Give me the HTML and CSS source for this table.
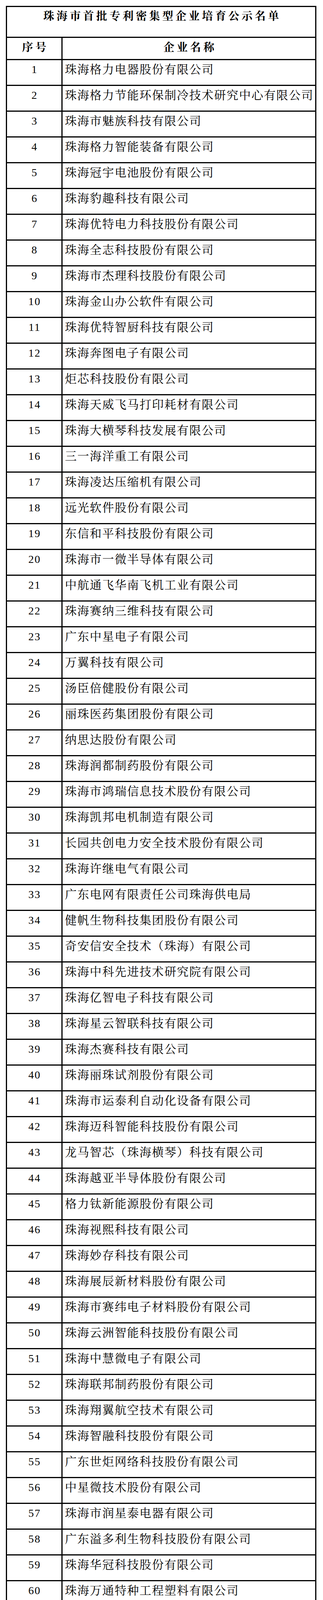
FILE: index.html
```html
<!DOCTYPE html>
<html lang="zh-CN">
<head>
<meta charset="utf-8">
<title>珠海市首批专利密集型企业培育公示名单</title>
<link rel="stylesheet" href="styles.css">
</head>
<body>
<div class="sheet">
<div class="title">珠海市首批专利密集型企业培育公示名单</div>
<div class="cell head">序号</div><div class="cell head">企业名称</div>
<div class="cell num">1</div><div class="cell name">珠海格力电器股份有限公司</div>
<div class="cell num">2</div><div class="cell name">珠海格力节能环保制冷技术研究中心有限公司</div>
<div class="cell num">3</div><div class="cell name">珠海市魅族科技有限公司</div>
<div class="cell num">4</div><div class="cell name">珠海格力智能装备有限公司</div>
<div class="cell num">5</div><div class="cell name">珠海冠宇电池股份有限公司</div>
<div class="cell num">6</div><div class="cell name">珠海豹趣科技有限公司</div>
<div class="cell num">7</div><div class="cell name">珠海优特电力科技股份有限公司</div>
<div class="cell num">8</div><div class="cell name">珠海全志科技股份有限公司</div>
<div class="cell num">9</div><div class="cell name">珠海市杰理科技股份有限公司</div>
<div class="cell num">10</div><div class="cell name">珠海金山办公软件有限公司</div>
<div class="cell num">11</div><div class="cell name">珠海优特智厨科技有限公司</div>
<div class="cell num">12</div><div class="cell name">珠海奔图电子有限公司</div>
<div class="cell num">13</div><div class="cell name">炬芯科技股份有限公司</div>
<div class="cell num">14</div><div class="cell name">珠海天威飞马打印耗材有限公司</div>
<div class="cell num">15</div><div class="cell name">珠海大横琴科技发展有限公司</div>
<div class="cell num">16</div><div class="cell name">三一海洋重工有限公司</div>
<div class="cell num">17</div><div class="cell name">珠海凌达压缩机有限公司</div>
<div class="cell num">18</div><div class="cell name">远光软件股份有限公司</div>
<div class="cell num">19</div><div class="cell name">东信和平科技股份有限公司</div>
<div class="cell num">20</div><div class="cell name">珠海市一微半导体有限公司</div>
<div class="cell num">21</div><div class="cell name">中航通飞华南飞机工业有限公司</div>
<div class="cell num">22</div><div class="cell name">珠海赛纳三维科技有限公司</div>
<div class="cell num">23</div><div class="cell name">广东中星电子有限公司</div>
<div class="cell num">24</div><div class="cell name">万翼科技有限公司</div>
<div class="cell num">25</div><div class="cell name">汤臣倍健股份有限公司</div>
<div class="cell num">26</div><div class="cell name">丽珠医药集团股份有限公司</div>
<div class="cell num">27</div><div class="cell name">纳思达股份有限公司</div>
<div class="cell num">28</div><div class="cell name">珠海润都制药股份有限公司</div>
<div class="cell num">29</div><div class="cell name">珠海市鸿瑞信息技术股份有限公司</div>
<div class="cell num">30</div><div class="cell name">珠海凯邦电机制造有限公司</div>
<div class="cell num">31</div><div class="cell name">长园共创电力安全技术股份有限公司</div>
<div class="cell num">32</div><div class="cell name">珠海许继电气有限公司</div>
<div class="cell num">33</div><div class="cell name">广东电网有限责任公司珠海供电局</div>
<div class="cell num">34</div><div class="cell name">健帆生物科技集团股份有限公司</div>
<div class="cell num">35</div><div class="cell name">奇安信安全技术（珠海）有限公司</div>
<div class="cell num">36</div><div class="cell name">珠海中科先进技术研究院有限公司</div>
<div class="cell num">37</div><div class="cell name">珠海亿智电子科技有限公司</div>
<div class="cell num">38</div><div class="cell name">珠海星云智联科技有限公司</div>
<div class="cell num">39</div><div class="cell name">珠海杰赛科技有限公司</div>
<div class="cell num">40</div><div class="cell name">珠海丽珠试剂股份有限公司</div>
<div class="cell num">41</div><div class="cell name">珠海市运泰利自动化设备有限公司</div>
<div class="cell num">42</div><div class="cell name">珠海迈科智能科技股份有限公司</div>
<div class="cell num">43</div><div class="cell name">龙马智芯（珠海横琴）科技有限公司</div>
<div class="cell num">44</div><div class="cell name">珠海越亚半导体股份有限公司</div>
<div class="cell num">45</div><div class="cell name">格力钛新能源股份有限公司</div>
<div class="cell num">46</div><div class="cell name">珠海视熙科技有限公司</div>
<div class="cell num">47</div><div class="cell name">珠海妙存科技有限公司</div>
<div class="cell num">48</div><div class="cell name">珠海展辰新材料股份有限公司</div>
<div class="cell num">49</div><div class="cell name">珠海市赛纬电子材料股份有限公司</div>
<div class="cell num">50</div><div class="cell name">珠海云洲智能科技股份有限公司</div>
<div class="cell num">51</div><div class="cell name">珠海中慧微电子有限公司</div>
<div class="cell num">52</div><div class="cell name">珠海联邦制药股份有限公司</div>
<div class="cell num">53</div><div class="cell name">珠海翔翼航空技术有限公司</div>
<div class="cell num">54</div><div class="cell name">珠海智融科技股份有限公司</div>
<div class="cell num">55</div><div class="cell name">广东世炬网络科技股份有限公司</div>
<div class="cell num">56</div><div class="cell name">中星微技术股份有限公司</div>
<div class="cell num">57</div><div class="cell name">珠海市润星泰电器有限公司</div>
<div class="cell num">58</div><div class="cell name">广东溢多利生物科技股份有限公司</div>
<div class="cell num">59</div><div class="cell name">珠海华冠科技股份有限公司</div>
<div class="cell num">60</div><div class="cell name">珠海万通特种工程塑料有限公司</div>
<div class="cell num">61</div><div class="cell name">珠海豹好玩科技有限公司</div>
<div class="cell num">62</div><div class="cell name">珠海磐磊智能科技有限公司</div>
<div class="cell num">63</div><div class="cell name">珠海派诺科技股份有限公司</div>
<div class="cell num">64</div><div class="cell name">珠海维尔康生物科技有限公司</div>
<div class="cell num">65</div><div class="cell name">广东宝莱特医用科技股份有限公司</div>
<div class="cell num">66</div><div class="cell name">珠海市君天电子科技有限公司</div>
<div class="cell num">67</div><div class="cell name">珠海天威微电子股份有限公司</div>
<div class="cell num">68</div><div class="cell name">珠海高凌信息科技股份有限公司</div>
<div class="cell num">69</div><div class="cell name">珠海极海半导体有限公司</div>
<div class="cell num">70</div><div class="cell name">珠海格力智能装备技术研究院有限公司</div>
<div class="cell num">71</div><div class="cell name">日海智能设备（珠海）有限公司</div>
<div class="cell num">72</div><div class="cell name">金邦达有限公司</div>
<div class="cell num">73</div><div class="cell name">珠海市磐石电子科技有限公司</div>
<div class="cell num">74</div><div class="cell name">乐健科技（珠海）有限公司</div>
<div class="cell num">75</div><div class="cell name">珠海天威新材料股份有限公司</div>
<div class="cell num">76</div><div class="cell name">英诺赛科（珠海）科技有限公司</div>
<div class="cell num">77</div><div class="cell name">芯耀辉科技有限公司</div>
<div class="cell num">78</div><div class="cell name">长园电力技术有限公司</div>
<div class="cell num">79</div><div class="cell name">珠海世纪鼎利科技股份有限公司</div>
<div class="cell num">80</div><div class="cell name">芯动微电子科技（珠海）有限公司</div>
<div class="cell num">81</div><div class="cell name">珠海英搏尔电气股份有限公司</div>
<div class="cell num">82</div><div class="cell name">珠海趣印科技有限公司</div>
<div class="cell num">83</div><div class="cell name">珠海汇金科技股份有限公司</div>
<div class="cell num">84</div><div class="cell name">珠海泰芯半导体有限公司</div>
<div class="cell num">85</div><div class="cell name">珠海格力精密模具有限公司</div>
<div class="cell num">86</div><div class="cell name">珠海圣美生物诊断技术有限公司</div>
<div class="cell num">87</div><div class="cell name">珠海罗西尼表业有限公司</div>
<div class="cell num">88</div><div class="cell name">星汉智能科技股份有限公司</div>
<div class="cell num">89</div><div class="cell name">珠海红塔仁恒包装股份有限公司</div>
<div class="cell num">90</div><div class="cell name">珠海安联锐视科技股份有限公司</div>
<div class="cell num">91</div><div class="cell name">珠海金山软件有限公司</div>
<div class="cell num">92</div><div class="cell name">珠海伊斯佳科技股份有限公司</div>
<div class="cell num">93</div><div class="cell name">珠海上富电技股份有限公司</div>
<div class="cell num">94</div><div class="cell name">珠海市新德汇信息技术有限公司</div>
<div class="cell num">95</div><div class="cell name">中航通飞研究院有限公司</div>
<div class="cell num">96</div><div class="cell name">珠海长先新材料科技股份有限公司</div>
<div class="cell num">97</div><div class="cell name">珠海光库科技股份有限公司</div>
<div class="cell num">98</div><div class="cell name">珠海思美亚碳粉有限公司</div>
<div class="cell num">99</div><div class="cell name">名创优品（横琴）企业管理有限公司</div>
<div class="cell num">100</div><div class="cell name">珠海金晟照明科技有限公司</div>
<div class="cell num">101</div><div class="cell name">珠海市科力通电器有限公司</div>
<div class="cell num">102</div><div class="cell name">珠海惠威科技有限公司</div>
</div>
</body>
</html>
```

FILE: styles.css
```css
html, body {
  margin: 0;
  padding: 0;
  background: #ffffff;
}

body {
  color: #000000;
  font-family: "Noto Serif CJK SC", "Noto Sans CJK SC", "Liberation Serif", serif;
}

.sheet {
  box-sizing: border-box;
  display: grid;
  grid-template-columns: 142px 649px;
  grid-template-rows: 79px 57px;
  grid-auto-rows: 66px;
  width: 794px;
  margin: 15px 0 16px 15px;
  border-top: 3px solid #000;
  border-left: 3px solid #000;
}

.title,
.cell {
  box-sizing: border-box;
  border-right: 3px solid #000;
  border-bottom: 3px solid #000;
  white-space: nowrap;
  min-width: 0;
}

.title {
  grid-column: 1 / -1;
  font-family: "Noto Serif CJK SC", "Noto Sans CJK SC", serif;
  font-weight: 700;
  font-size: 28px;
  line-height: 34px;
  letter-spacing: 5.8px;
  text-align: center;
  padding: 4px 0 0 6px;
}

.head {
  font-family: "Noto Serif CJK SC", "Noto Sans CJK SC", serif;
  font-weight: 700;
  font-size: 28px;
  line-height: 34px;
  letter-spacing: 6px;
  text-align: center;
  padding: 5px 0 0 6px;
}

.num {
  font-family: "Liberation Serif", "Times New Roman", serif;
  font-size: 28px;
  line-height: 36px;
  letter-spacing: 2px;
  text-align: center;
  padding: 6px 0 0 2px;
}

.name {
  font-family: "Noto Serif CJK SC", "Noto Sans CJK SC", serif;
  font-size: 30px;
  line-height: 36px;
  letter-spacing: 1.8px;
  text-align: left;
  padding: 3px 0 0 6px;
}
```
